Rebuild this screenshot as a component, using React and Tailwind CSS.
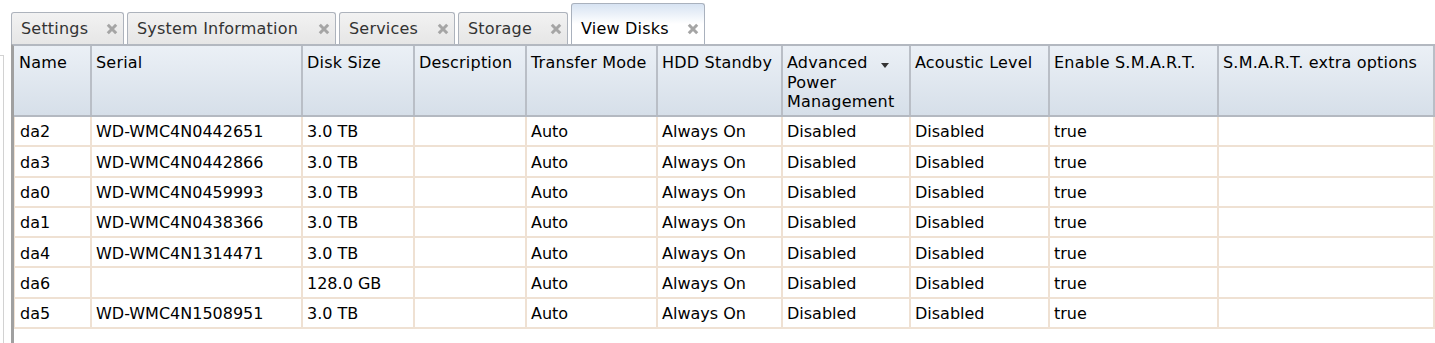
import React from "react";

const cols = [
  { key: "name", label: "Name", w: "w-[78px]", first: true },
  { key: "serial", label: "Serial", w: "w-[211px]" },
  { key: "size", label: "Disk Size", w: "w-[112px]" },
  { key: "desc", label: "Description", w: "w-[112px]" },
  { key: "mode", label: "Transfer Mode", w: "w-[131px]" },
  { key: "standby", label: "HDD Standby", w: "w-[125px]" },
  { key: "apm", label: "Advanced Power Management", w: "w-[128px]", sort: true },
  { key: "acoustic", label: "Acoustic Level", w: "w-[139px]" },
  { key: "smart", label: "Enable S.M.A.R.T.", w: "w-[169px]" },
  { key: "extra", label: "S.M.A.R.T. extra options", w: "flex-1 min-w-0" },
];

const rows = [
  ["da2", "WD-WMC4N0442651", "3.0 TB"],
  ["da3", "WD-WMC4N0442866", "3.0 TB"],
  ["da0", "WD-WMC4N0459993", "3.0 TB"],
  ["da1", "WD-WMC4N0438366", "3.0 TB"],
  ["da4", "WD-WMC4N1314471", "3.0 TB"],
  ["da6", "", "128.0 GB"],
  ["da5", "WD-WMC4N1508951", "3.0 TB"],
];

const tabs = [
  { label: "Settings", w: "w-[113px]" },
  { label: "System Information", w: "w-[209px]" },
  { label: "Services", w: "w-[116px]" },
  { label: "Storage", w: "w-[110px]" },
  { label: "View Disks", w: "w-[134px]", active: true },
];

function CloseX() {
  return (
    <svg width="12" height="12" viewBox="0 0 12 12" className="mb-[3px]">
      <path d="M1.8 1.8 L10.2 10.2 M10.2 1.8 L1.8 10.2" stroke="#a5a5a5" strokeWidth="3" strokeLinecap="butt" />
    </svg>
  );
}

export default function App() {
  return (
    <div className="w-[1435px] h-[343px] bg-white overflow-hidden flex font-['DejaVu_Sans',sans-serif] text-[16px] leading-[19.5px] text-black">
      <div className="w-[4px] mt-[55px] border-t border-r border-[#d2d2d2] shrink-0" />
      <div className="ml-[7px] flex-1 min-w-0 flex flex-col">
        <div className="h-[44px] flex items-end gap-[3px] shrink-0">
          {tabs.map((t) =>
            t.active ? (
              <div
                key={t.label}
                className={`${t.w} h-[41px] rounded-t-[3px] border border-b-0 border-[#a9b1bd] bg-gradient-to-b from-[#d7e3f2] via-white to-white flex items-end justify-between pl-[9px] pr-[5px] pb-[6px] text-black`}
              >
                <span className="tracking-[0.2px]">{t.label}</span>
                <CloseX />
              </div>
            ) : (
              <div
                key={t.label}
                className={`${t.w} h-[32px] rounded-t-[3px] border border-b-0 border-[#adb3bc] bg-gradient-to-b from-[#f2f2f2] to-[#e6e6e6] flex items-end justify-between pl-[9px] pr-[5px] pb-[6px] text-[#333]`}
              >
                <span className="tracking-[0.2px]">{t.label}</span>
                <CloseX />
              </div>
            )
          )}
        </div>
        <div className="flex-1 flex flex-col border-l-[3px] border-l-[#a0a0a0] border-t-2 border-t-[#b3b8c0]">
          <div className="h-[71px] flex shrink-0 border-b-2 border-[#b4b9c1] bg-gradient-to-b from-[#ebf0f6] to-[#d6dfe9]">
            {cols.map((c) => (
              <div
                key={c.key}
                className={`${c.w} relative ${c.first ? "pl-[5px]" : "pl-[4px]"} pt-[7px] border-r-2 border-[#b9bec6] overflow-hidden whitespace-normal tracking-[0.2px]`}
              >
                {c.sort ? (
                  <>
                    <div className="w-[96px]">{c.label}</div>
                    <div className="absolute left-[98px] top-[17px] w-0 h-0 border-l-[4px] border-r-[4px] border-t-[5px] border-l-transparent border-r-transparent border-t-[#333]" />
                  </>
                ) : (
                  <span className="whitespace-nowrap">{c.label}</span>
                )}
              </div>
            ))}
          </div>
          {rows.map((r) => {
            const vals = [r[0], r[1], r[2], "", "Auto", "Always On", "Disabled", "Disabled", "true", ""];
            return (
              <div key={r[0]} className="h-[30.3px] flex shrink-0 border-b-2 border-[#efe1d3]">
                {cols.map((c, i) => (
                  <div
                    key={c.key}
                    className={`${c.w} flex items-center pt-[2px] ${c.first ? "pl-[5px] border-l border-l-[#efe1d3]" : "pl-[4px]"} border-r-2 border-r-[#efe1d3] whitespace-nowrap overflow-hidden`}
                  >
                    {vals[i]}
                  </div>
                ))}
              </div>
            );
          })}
        </div>
      </div>
    </div>
  );
}
